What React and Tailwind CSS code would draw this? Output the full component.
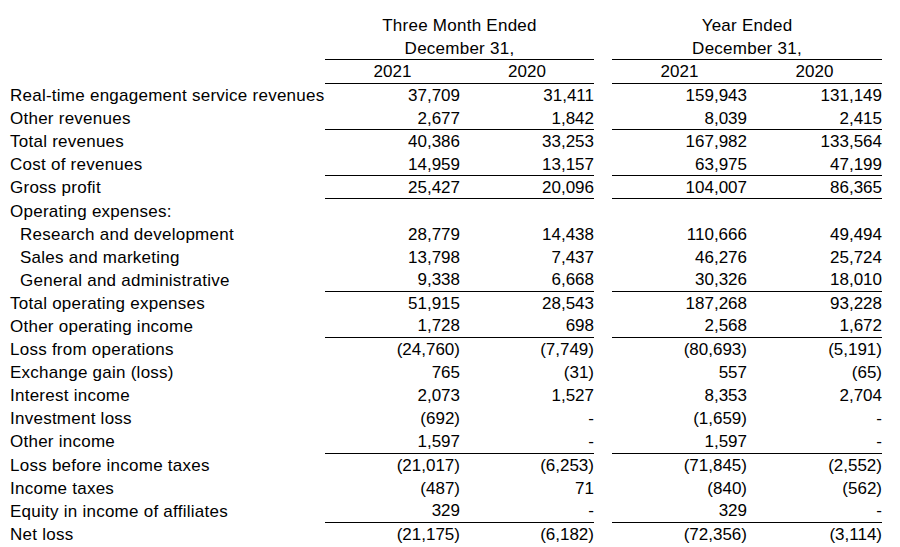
import React from "react";

const rows = [
  { l: "Real-time engagement service revenues", v: ["37,709", "31,411", "159,943", "131,149"] },
  { l: "Other revenues", v: ["2,677", "1,842", "8,039", "2,415"], line: true },
  { l: "Total revenues", v: ["40,386", "33,253", "167,982", "133,564"] },
  { l: "Cost of revenues", v: ["14,959", "13,157", "63,975", "47,199"], line: true },
  { l: "Gross profit", v: ["25,427", "20,096", "104,007", "86,365"], line: true },
  { l: "Operating expenses:", v: ["", "", "", ""] },
  { l: "Research and development", v: ["28,779", "14,438", "110,666", "49,494"], indent: true },
  { l: "Sales and marketing", v: ["13,798", "7,437", "46,276", "25,724"], indent: true },
  { l: "General and administrative", v: ["9,338", "6,668", "30,326", "18,010"], indent: true, line: true },
  { l: "Total operating expenses", v: ["51,915", "28,543", "187,268", "93,228"] },
  { l: "Other operating income", v: ["1,728", "698", "2,568", "1,672"], line: true },
  { l: "Loss from operations", v: ["(24,760)", "(7,749)", "(80,693)", "(5,191)"] },
  { l: "Exchange gain (loss)", v: ["765", "(31)", "557", "(65)"] },
  { l: "Interest income", v: ["2,073", "1,527", "8,353", "2,704"] },
  { l: "Investment loss", v: ["(692)", "-", "(1,659)", "-"] },
  { l: "Other income", v: ["1,597", "-", "1,597", "-"], line: true },
  { l: "Loss before income taxes", v: ["(21,017)", "(6,253)", "(71,845)", "(2,552)"] },
  { l: "Income taxes", v: ["(487)", "71", "(840)", "(562)"] },
  { l: "Equity in income of affiliates", v: ["329", "-", "329", "-"], line: true },
  { l: "Net loss", v: ["(21,175)", "(6,182)", "(72,356)", "(3,114)"] },
];

function Row({ label, values, line, indent, center, h = "h-[23px]" }) {
  const b = line ? "border-b border-black" : "";
  const al = center ? "justify-center" : "justify-end";
  return (
    <div className={`flex ${h}`}>
      <div className={`w-[325px] flex items-center whitespace-nowrap tracking-[0.25px] ${indent ? "pl-[20px]" : "pl-[10px]"}`}>{label}</div>
      <div className={`w-[135px] flex items-center ${al} ${b}`}>{values[0]}</div>
      <div className={`w-[134px] flex items-center ${al} ${b}`}>{values[1]}</div>
      <div className="w-[18px]" />
      <div className={`w-[135px] flex items-center ${al} ${b}`}>{values[2]}</div>
      <div className={`w-[135px] flex items-center ${al} ${b}`}>{values[3]}</div>
    </div>
  );
}

export default function App() {
  return (
    <div
      className="w-[900px] h-[547px] bg-white text-black text-[17px] leading-[19px] pt-[14px] overflow-hidden"
      style={{ fontFamily: '"Liberation Sans", Arial, sans-serif' }}
    >
      <div className="flex h-[23px] tracking-[0.25px]">
        <div className="w-[325px]" />
        <div className="w-[269px] flex items-center justify-center">Three Month Ended</div>
        <div className="w-[18px]" />
        <div className="w-[270px] flex items-center justify-center">Year Ended</div>
      </div>
      <div className="flex h-[23px] tracking-[0.25px]">
        <div className="w-[325px]" />
        <div className="w-[269px] flex items-center justify-center border-b border-black">December 31,</div>
        <div className="w-[18px]" />
        <div className="w-[270px] flex items-center justify-center border-b border-black">December 31,</div>
      </div>
      <Row label="" values={["2021", "2020", "2021", "2020"]} center line h="h-[24px]" />
      {rows.map((r, i) => (
        <Row key={i} label={r.l} values={r.v} line={r.line} indent={r.indent} h="h-[23.1px]" />
      ))}
    </div>
  );
}
